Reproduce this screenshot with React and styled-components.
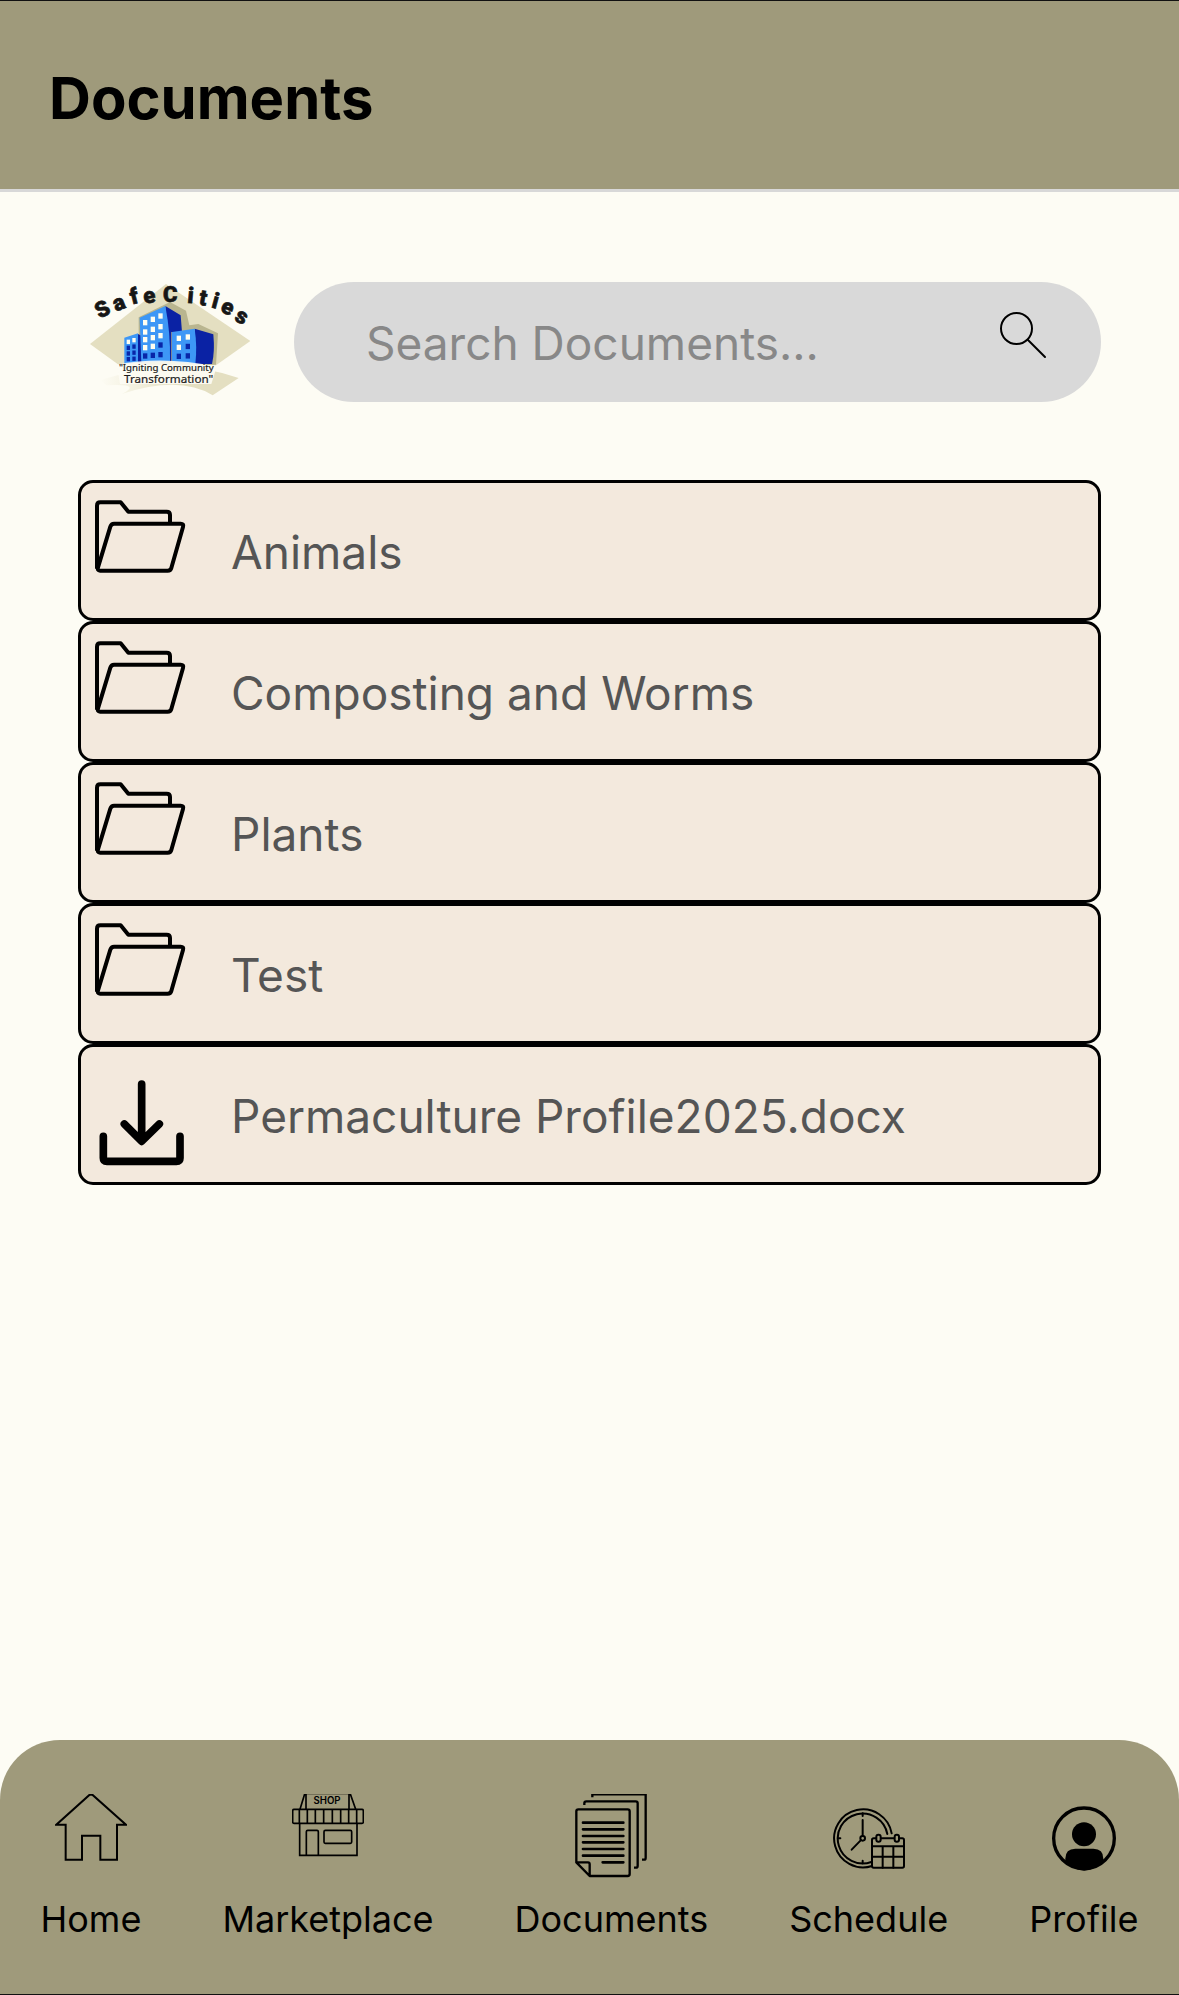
import React from "react";
import styled, { createGlobalStyle } from "styled-components";

const olive = "#9f9a7b";
const cream = "#fdfcf4";

const GlobalStyle = createGlobalStyle`
  *, *::before, *::after { box-sizing: border-box; }
  body {
    margin: 0;
    background: ${cream};
    font-family: Inter, "Liberation Sans", sans-serif;
    color: #000;
  }
`;

const Page = styled.div`
  display: flex;
  flex-direction: column;
  min-height: 100vh;
  border-top: 1px solid #111;
  border-bottom: 1px solid #111;
`;

const Header = styled.header`
  display: flex;
  align-items: center;
  padding: 61px 49px 55px;
  background: ${olive};
  border-bottom: 3px solid #d8d8d8;
`;

const Title = styled.h1`
  margin: 0;
  font-size: 58px;
  line-height: 72px;
  font-weight: 700;
`;

const Main = styled.main`
  flex: 1;
  display: flex;
  flex-direction: column;
  gap: 78px;
  padding: 90px 78px;
`;

const SearchRow = styled.div`
  display: flex;
  align-items: center;
`;

const Logo = styled.svg`
  flex: none;
  width: 162px;
  height: 120px;
  margin: 0 43px 0 11px;
  overflow: visible;
`;

const SearchForm = styled.form`
  flex: 1;
  min-width: 0;
  display: flex;
  height: 120px;
  border-radius: 60px;
  background: #d9d9d9;
  overflow: hidden;
`;

const SearchInput = styled.input`
  flex: 1;
  min-width: 0;
  padding: 2px 0 0 72px;
  border: 0;
  outline: 0;
  background: transparent;
  font-family: inherit;
  font-size: 46px;
  color: #000;

  &::placeholder {
    color: #888;
    opacity: 1;
  }
`;

const SearchButton = styled.button`
  display: flex;
  align-items: flex-start;
  padding: 29px 54px 0 0;
  border: 0;
  background: transparent;
  cursor: pointer;

  svg { width: 48px; height: 48px; }
`;

const List = styled.ul`
  margin: 0;
  padding: 0;
  list-style: none;
`;

const Row = styled.button`
  display: flex;
  align-items: center;
  gap: 40px;
  width: 100%;
  padding: 0 14px;
  border: 3px solid #000;
  border-radius: 15px;
  background: #f3e9dd;
  color: #555;
  font-family: inherit;
  font-size: 46px;
  line-height: 60px;
  text-align: left;
  cursor: pointer;
`;

const RowLabel = styled.span`
  padding-top: 2px;
`;

const RowIcon = styled.svg`
  flex: none;
  width: 96px;
  height: 135px;
  fill: none;
  stroke: #000;
`;

const TabBar = styled.nav`
  display: flex;
  justify-content: space-around;
  padding: 54px 0 53px;
  border-radius: 60px 60px 0 0;
  background: ${olive};
`;

const Tab = styled.a`
  display: flex;
  flex-direction: column;
  align-items: center;
  gap: 13px;
  color: #000;
  font-size: 36px;
  line-height: 44px;
  text-decoration: none;
`;

const TabIcon = styled.svg`
  width: 72px;
  height: 90px;
  fill: none;
  stroke: #000;
  stroke-width: ${(p) => p.$stroke}px;
`;

const arcLetters = [
  ["S", 97, 147, -28],
  ["a", 146, 127, -22],
  ["f", 192, 108, -14],
  ["e", 237, 106, -8],
  ["C", 301, 102, 0],
  ["i", 362, 106, 5],
  ["t", 400, 113, 10],
  ["i", 437, 122, 15],
  ["e", 474, 140, 22],
  ["s", 516, 168, 28],
];

function windowsFor(cols, rows, lit, skew) {
  return rows.flatMap((y, r) =>
    cols.map((x, c) => (
      <rect
        key={`${x}-${y}`}
        x={x}
        y={y - c * skew * (rows.length - r) / rows.length}
        width={lit.size}
        height={lit.size + 3}
        fill={lit.map[r][c] ? "#fffef0" : "#0826a8"}
      />
    ))
  );
}

function SafeCitiesLogo() {
  return (
    <Logo viewBox="57 66 486 360" role="img" aria-label="SafeCities">
      <defs>
        <linearGradient id="swoosh" x1="0" x2="1" y1="0" y2="0">
          <stop offset="0" stopColor="#e4dfc1" stopOpacity="0" />
          <stop offset=".6" stopColor="#e4dfc1" />
        </linearGradient>
      </defs>
      <path d="M60 252 L288 72 L541 243 L438 316 H148 Z" fill="#e4dfc1" />
      <path d="M90 360 Q330 290 506 354 L428 406 Q330 345 155 402 Q220 370 110 376 Z" fill="url(#swoosh)" />
      <path d="M206 172 L300 126 L348 152 L358 196 L385 192 L444 220 L438 314 H206 Z" fill="#b9b58f" />
      <path d="M204 222 L216 228 V308 H204 Z" fill="#0a22a4" />
      <path d="M163 233 L204 220 V308 L163 312 Z" fill="#3d97f6" />
      <path d="M286 138 L332 166 L336 216 H304 V304 H296 Z" fill="#0a22a4" />
      <path d="M209 173 L286 138 Q302 220 300 304 L214 308 Z" fill="#3d97f6" />
      <path d="M374 206 L430 223 Q435 275 426 312 H374 Z" fill="#0a22a4" />
      <path d="M306 216 L374 206 Q382 260 376 312 L306 306 Z" fill="#3d97f6" />
      {windowsFor([219, 242, 265], [180, 208, 231, 255, 280], {
        size: 13,
        map: [[1, 1, 1], [1, 1, 1], [1, 1, 1], [1, 1, 0], [0, 0, 0]],
      }, 10)}
      {windowsFor([170, 187], [239, 257, 274, 291], {
        size: 10,
        map: [[1, 1], [0, 0], [0, 0], [0, 0]],
      }, 5)}
      {windowsFor([320, 347], [227, 254, 281], {
        size: 13,
        map: [[1, 1], [1, 0], [0, 0]],
      }, 4)}
      <path d="M140 314 Q280 286 440 320 L424 372 H150 Z" fill={cream} opacity=".9" />
      <g
        fill="#161616"
        stroke="#161616"
        strokeWidth="2"
        fontFamily="Roboto, 'Liberation Sans', sans-serif"
        fontWeight="900"
        fontSize="66"
        textAnchor="middle"
      >
        {arcLetters.map(([letter, x, y, angle], i) => (
          <text key={i} x={x} y={y + 23} transform={`rotate(${angle} ${x} ${y})`}>
            {letter}
          </text>
        ))}
      </g>
      <g fill="#1c1c1c" stroke="#1c1c1c" strokeWidth=".6" fontFamily="'Noto Sans', 'Open Sans', sans-serif" textAnchor="middle">
        <text x="289" y="334" fontSize="29">"Igniting Community</text>
        <text x="296" y="368" fontSize="35">Transformation"</text>
      </g>
    </Logo>
  );
}

function FolderIcon() {
  return (
    <RowIcon viewBox="75 39 288 405" strokeWidth="12" strokeLinejoin="round" aria-hidden="true">
      <path d="M81 296 V107 Q81 97 91 97 H152 L175 125 H290 Q300 125 300 135 V161" />
      <path d="M132 161 H332 Q342 161 339 171 L304 294 Q302 302 293 302 H90 Q81 302 84 292 L121 170 Q124 161 132 161 Z" />
    </RowIcon>
  );
}

function DownloadIcon() {
  return (
    <RowIcon viewBox="45 -9 288 405" strokeWidth="23" strokeLinecap="round" aria-hidden="true">
      <path d="M185 102 V272 M133 222 L185 274 L238 222" strokeLinejoin="round" />
      <path d="M70 259 V324 Q70 334 81 334 H289 Q300 334 300 324 V259" />
    </RowIcon>
  );
}

function HomeIcon() {
  return (
    <TabIcon viewBox="75 72 216 270" $stroke={6} aria-hidden="true">
      <path d="M179 74 H187 L288 164 H261 V269 H211 V197 H156 V269 H107 V164 H79 Z" />
    </TabIcon>
  );
}

function ShopIcon() {
  return (
    <TabIcon viewBox="273 72 216 270" $stroke={5} aria-hidden="true">
      <path d="M311 72 L297 118 M315 72 V118 M444 72 V118 M448 72 L464 118" />
      <path d="M311 73 H449" strokeWidth="1" />
      <rect x="275" y="118" width="212" height="42" rx="4" />
      <path d="M295 118 V160 M319 118 V160 M343 118 V160 M368 118 V160 M394 118 V160 M419 118 V160 M443 118 V160 M467 118 V160" />
      <path d="M296 160 V256 H468 V160 M316 256 V185 Q316 181 320 181 H348 Q352 181 352 185 V256" />
      <rect x="369" y="181" width="83" height="39" rx="4" />
      <text x="378" y="102" textAnchor="middle" fontSize="29" fontWeight="600" fill="#000" stroke="none" fontFamily="Inter, sans-serif">
        SHOP
      </text>
    </TabIcon>
  );
}

function DocumentsIcon() {
  return (
    <TabIcon viewBox="225 72 216 270" $stroke={7} strokeLinejoin="round" aria-hidden="true">
      <path d="M277 82 V73 H437 V263 Q437 269 432 269 H426" />
      <path d="M253 105 V100 Q253 94 259 94 H407 Q413 94 413 100 V287 Q413 293 407 293 H402" />
      <path d="M229 277 V124 Q229 118 235 118 H383 Q389 118 389 124 V312 Q389 318 383 318 H269 L229 277 H264 Q269 277 269 283 V318" />
      <path
        strokeWidth="8"
        strokeLinecap="round"
        d="M249 158 H370 M249 178 H370 M249 198 H370 M249 217 H370 M249 237 H370 M249 257 H370 M308 277 H370"
      />
    </TabIcon>
  );
}

function ScheduleIcon() {
  return (
    <TabIcon viewBox="187 72 216 270" $stroke={6} strokeLinecap="round" aria-hidden="true">
      <path d="M363 190 A87 87 0 1 0 304 288 M350 192 A75 75 0 1 0 302 276" />
      <path d="M276 150 V197 M270 211 L243 239 M276 130 V138 M276 272 V280 M203 205 H209" />
      <circle cx="276" cy="205" r="7" />
      <rect x="304" y="205" width="96" height="88" rx="5" fill={olive} />
      <path d="M304 229 H400 M304 260 H400 M336 229 V293 M368 229 V293" />
      <rect x="317" y="194" width="13" height="21" rx="6" fill={olive} />
      <rect x="372" y="194" width="13" height="21" rx="6" fill={olive} />
    </TabIcon>
  );
}

function ProfileIcon() {
  return (
    <TabIcon viewBox="141 222 216 270" $stroke={10} aria-hidden="true">
      <circle cx="249" cy="355" r="91" />
      <circle cx="249" cy="343" r="36" fill="#000" stroke="none" />
      <path d="M193 424 V416 Q193 386 223 386 H277 Q307 386 307 416 V424 Q249 480 193 424 Z" fill="#000" stroke="none" />
    </TabIcon>
  );
}

const entries = [
  { name: "Animals", Icon: FolderIcon },
  { name: "Composting and Worms", Icon: FolderIcon },
  { name: "Plants", Icon: FolderIcon },
  { name: "Test", Icon: FolderIcon },
  { name: "Permaculture Profile2025.docx", Icon: DownloadIcon },
];

const tabs = [
  { name: "Home", Icon: HomeIcon },
  { name: "Marketplace", Icon: ShopIcon },
  { name: "Documents", Icon: DocumentsIcon },
  { name: "Schedule", Icon: ScheduleIcon },
  { name: "Profile", Icon: ProfileIcon },
];

export default function App() {
  return (
    <>
      <GlobalStyle />
      <Page>
        <Header>
          <Title>Documents</Title>
        </Header>
        <Main>
          <SearchRow>
            <SafeCitiesLogo />
            <SearchForm role="search" onSubmit={(e) => e.preventDefault()}>
              <SearchInput type="text" aria-label="Search Documents" placeholder="Search Documents..." />
              <SearchButton type="submit" aria-label="Search">
                <svg viewBox="0 0 48 48" fill="none" stroke="#000" strokeWidth="2" strokeLinecap="round" aria-hidden="true">
                  <circle cx="17.5" cy="17.5" r="15.5" />
                  <path d="M29 29 L46 46" />
                </svg>
              </SearchButton>
            </SearchForm>
          </SearchRow>
          <List>
            {entries.map(({ name, Icon }) => (
              <li key={name}>
                <Row type="button">
                  <Icon />
                  <RowLabel>{name}</RowLabel>
                </Row>
              </li>
            ))}
          </List>
        </Main>
        <TabBar aria-label="Main">
          {tabs.map(({ name, Icon }) => (
            <Tab key={name} href={`#${name.toLowerCase()}`} aria-current={name === "Documents" ? "page" : undefined}>
              <Icon />
              <span>{name}</span>
            </Tab>
          ))}
        </TabBar>
      </Page>
    </>
  );
}
